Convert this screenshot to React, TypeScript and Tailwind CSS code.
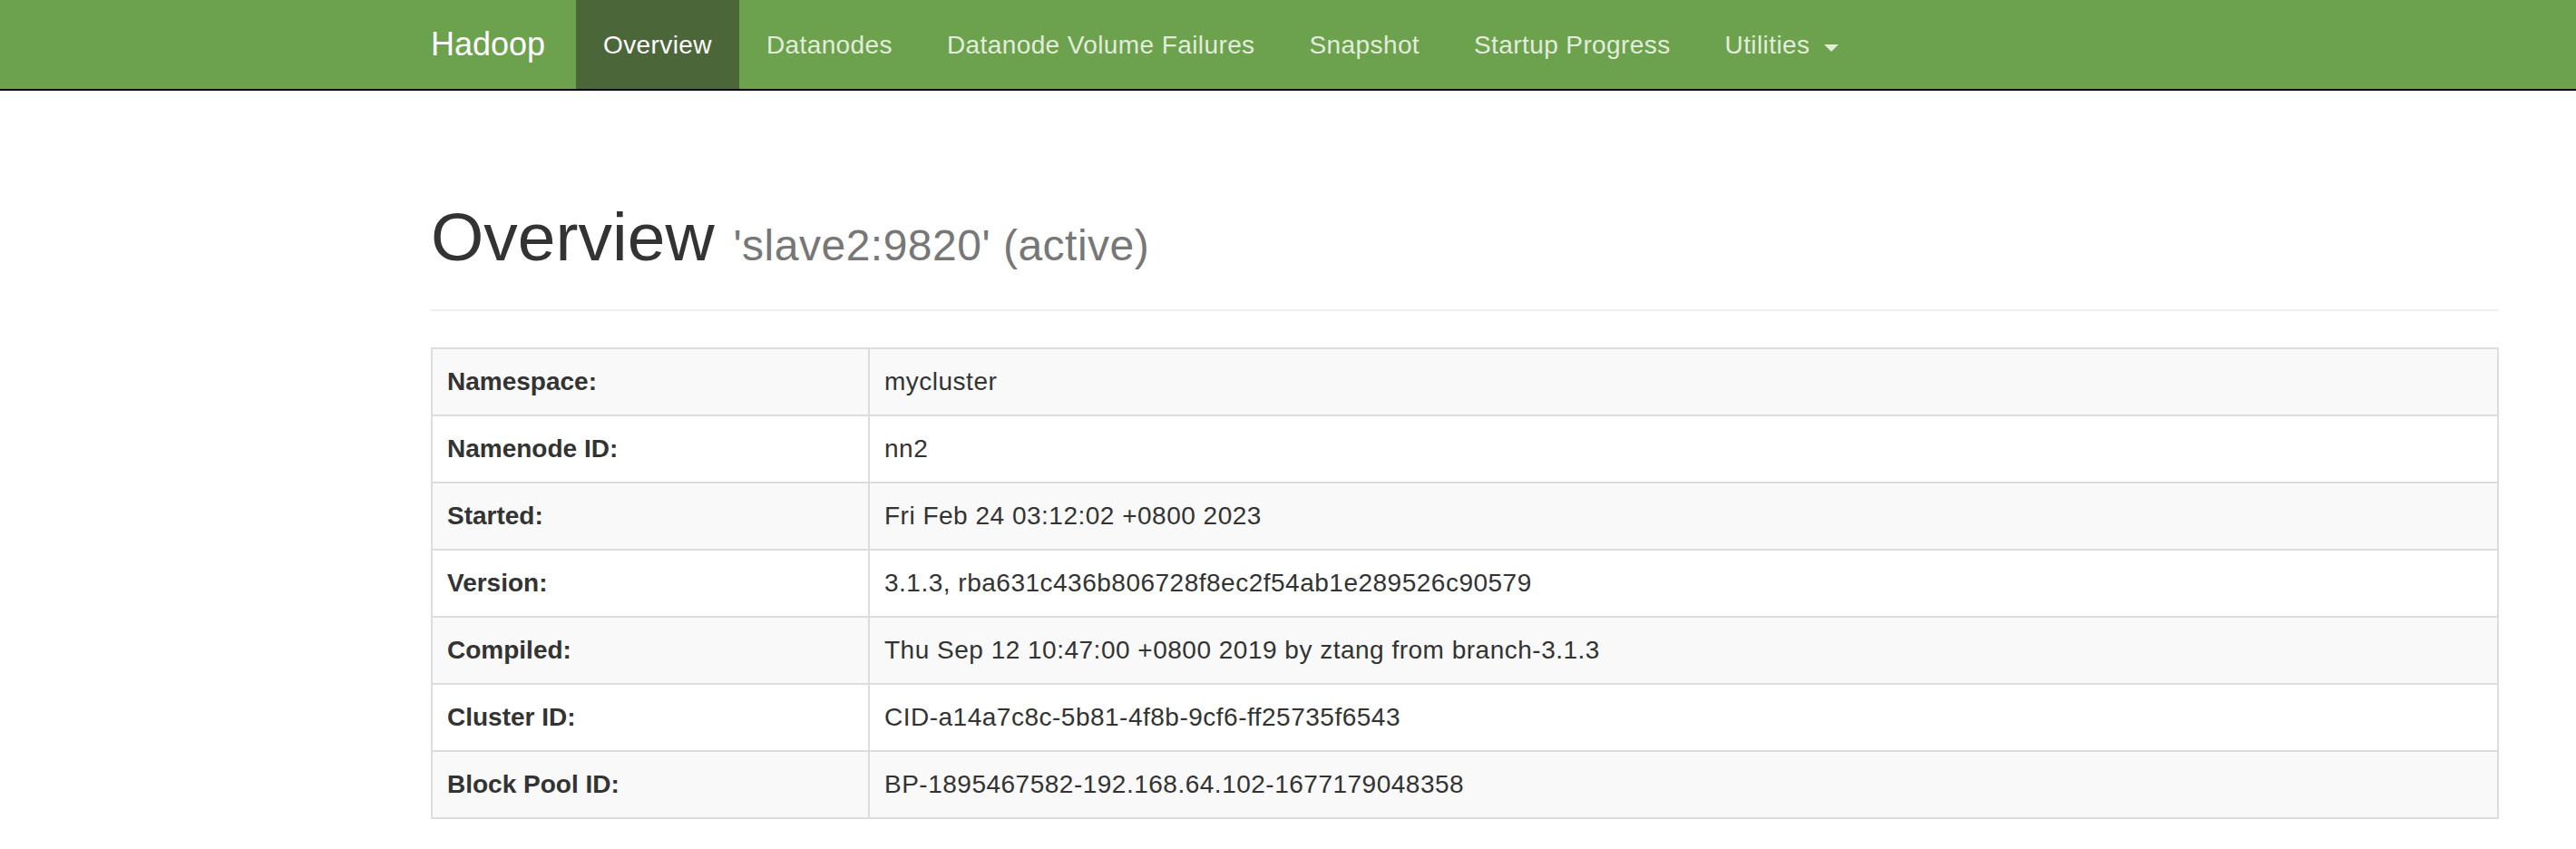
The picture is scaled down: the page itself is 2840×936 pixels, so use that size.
import React from 'react';

const rows: [string, string][] = [
  ['Namespace:', 'mycluster'],
  ['Namenode ID:', 'nn2'],
  ['Started:', 'Fri Feb 24 03:12:02 +0800 2023'],
  ['Version:', '3.1.3, rba631c436b806728f8ec2f54ab1e289526c90579'],
  ['Compiled:', 'Thu Sep 12 10:47:00 +0800 2019 by ztang from branch-3.1.3'],
  ['Cluster ID:', 'CID-a14a7c8c-5b81-4f8b-9cf6-ff25735f6543'],
  ['Block Pool ID:', 'BP-1895467582-192.168.64.102-1677179048358'],
];

const navItems = ['Datanodes', 'Datanode Volume Failures', 'Snapshot', 'Startup Progress'];

export default function App() {
  return (
    <div className="min-h-[936px] bg-white text-[#333] font-['Liberation_Sans',Arial,sans-serif]">
      {/* Navbar */}
      <nav className="bg-[#6ca14d] border-b-2 border-[#080808]">
        <div className="ml-[475px] w-[2280px] flex items-stretch h-[98px]">
          <a className="w-[160px] pt-[29px] text-[36px] leading-[40px] text-white">Hadoop</a>
          <ul className="flex text-[28px] leading-[40px] tracking-[0.4px]">
            <li className="bg-[#4b6638] px-[30px] pt-[30px] text-white">Overview</li>
            {navItems.map((item) => (
              <li key={item} className="px-[30px] pt-[30px] text-[#e2ecdb]">
                {item}
              </li>
            ))}
            <li className="px-[30px] pt-[30px] text-[#e2ecdb] flex items-start">
              <span>Utilities</span>
              <span className="ml-[16px] mt-[19px] w-0 h-0 border-t-[8px] border-x-[8px] border-t-[#e2ecdb] border-x-transparent" />
            </li>
          </ul>
        </div>
      </nav>

      {/* Content */}
      <div className="ml-[475px] w-[2280px]">
        <div className="mt-[122px] pb-[18px] border-b-2 border-[#eee]">
          <h1 className="mb-[13px] text-[75px] leading-[79px] text-[#333]">
            Overview{' '}
            <small className="text-[48px] tracking-[0.5px] text-[#777]">'slave2:9820' (active)</small>
          </h1>
        </div>

        <table className="mt-[40px] w-full border-collapse border-2 border-[#ddd] text-[28px] leading-[40px]">
          <tbody>
            {rows.map(([label, value], i) => (
              <tr key={label} className={i % 2 === 0 ? 'bg-[#f9f9f9]' : 'bg-white'}>
                <th className="w-[482px] border-2 border-[#ddd] px-[16px] py-[16px] text-left font-bold">{label}</th>
                <td className="border-2 border-[#ddd] px-[16px] py-[16px] tracking-[0.5px]">{value}</td>
              </tr>
            ))}
          </tbody>
        </table>
      </div>
    </div>
  );
}
